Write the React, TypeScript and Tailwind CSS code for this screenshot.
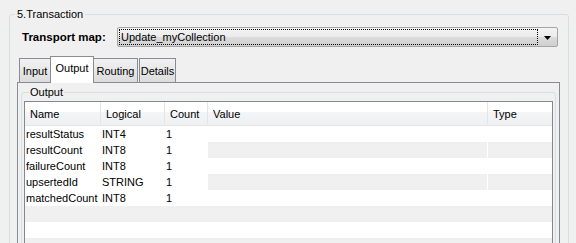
const rows: string[][] = [
  ['resultStatus', 'INT4', '1'],
  ['resultCount', 'INT8', '1'],
  ['failureCount', 'INT8', '1'],
  ['upsertedId', 'STRING', '1'],
  ['matchedCount', 'INT8', '1'],
  ['', '', ''],
  ['', '', ''],
  ['', '', ''],
];

const cols = 'grid grid-cols-[76px_64px_43px_280px_64px]';

function Tab({ label, active, className }: { label: string; active?: boolean; className: string }) {
  if (active) {
    return (
      <div
        className={`relative z-10 -mb-px h-[27px] border border-b-0 border-[#898c95] bg-white pt-[4px] text-center ${className}`}
      >
        {label}
      </div>
    );
  }
  return (
    <div
      className={`h-[24px] border border-b-0 border-[#898c95] bg-[linear-gradient(#f2f2f2,#dcdcdc)] pt-[5px] text-center ${className}`}
    >
      {label}
    </div>
  );
}

export default function App() {
  return (
    <div
      className="h-[243px] w-[576px] overflow-hidden bg-[#f0f0f0] pt-[7px] text-[11px] leading-[14px] text-black"
      style={{ fontFamily: '"Liberation Sans", Arial, sans-serif' }}
    >
      {/* 5.Transaction 그룹 */}
      <fieldset className="ml-[9px] h-[260px] w-[560px] rounded-[3px] border border-[#d5dfe5]">
        <legend className="ml-[5px] px-[2px] text-[11px] leading-[14px]">5.Transaction</legend>

        <div className="mt-[6px] flex items-center">
          <div className="ml-[12px] w-[95px] text-[11.5px] font-bold">Transport map:</div>
          <div className="flex h-[20px] w-[441px] items-center rounded-[2px] border border-[#a5a5a5] bg-[linear-gradient(#f3f3f3_0%,#ebebeb_50%,#dddddd_50%,#cfcfcf_100%)] px-[1px]">
            <div className="flex h-[16px] w-[419px] items-center border border-dotted border-black pl-[1px]">
              Update_myCollection
            </div>
            <div className="flex flex-1 items-center justify-center pt-[1px]">
              <svg width="7" height="4" viewBox="0 0 7 4">
                <path d="M0 0h7L3.5 4z" fill="#000" />
              </svg>
            </div>
          </div>
        </div>

        {/* 탭 */}
        <div className="ml-[7px] mt-[9px] w-[543px]">
          <div className="flex items-end pl-[2px]">
            <Tab label="Input" className="w-[32px]" />
            <Tab label="Output" active className="-ml-px w-[44px]" />
            <Tab label="Routing" className="-ml-px w-[45px]" />
            <Tab label="Details" className="ml-px w-[37px]" />
          </div>

          {/* 탭 패널 */}
          <div className="h-[170px] border border-[#898c95] bg-[#f0f0f0] px-[3px] pt-[2px]">
            <fieldset className="h-[170px] rounded-[3px] border border-[#d5dfe5] px-[2px]">
              <legend className="ml-[5px] px-[1px] leading-[14px]">Output</legend>

              <div className="mt-[2px] h-[160px] border border-[#828790] bg-white">
                <div
                  className={`${cols} h-[24px] border-b border-[#e5e5e5] bg-[linear-gradient(#ffffff_0%,#ffffff_42%,#f4f5f7_42%,#eef0f2_100%)]`}
                >
                  {['Name', 'Logical', 'Count', 'Value', 'Type'].map((h, i) => (
                    <div
                      key={h}
                      className={`flex items-center pl-[5px] ${i < 4 ? 'border-r border-[#e3e5e8]' : ''}`}
                    >
                      {h}
                    </div>
                  ))}
                </div>
                {rows.map((r, i) => {
                  const grey = i % 2 === 1;
                  const empty = r[0] === '';
                  if (empty) {
                    return <div key={i} className={`h-[16px] ${grey ? 'bg-[#f0f0f0]' : 'bg-white'}`} />;
                  }
                  return (
                    <div key={i} className={`${cols} h-[16px]`}>
                      {r.map((c, j) => (
                        <div key={j} className="flex items-center border-r border-white bg-white pl-[1px]">
                          {c}
                        </div>
                      ))}
                      <div className={`border-r border-white ${grey ? 'bg-[#f0f0f0]' : 'bg-white'}`} />
                      <div className={grey ? 'bg-[#f0f0f0]' : 'bg-white'} />
                    </div>
                  );
                })}
              </div>
            </fieldset>
          </div>
        </div>
      </fieldset>
    </div>
  );
}
